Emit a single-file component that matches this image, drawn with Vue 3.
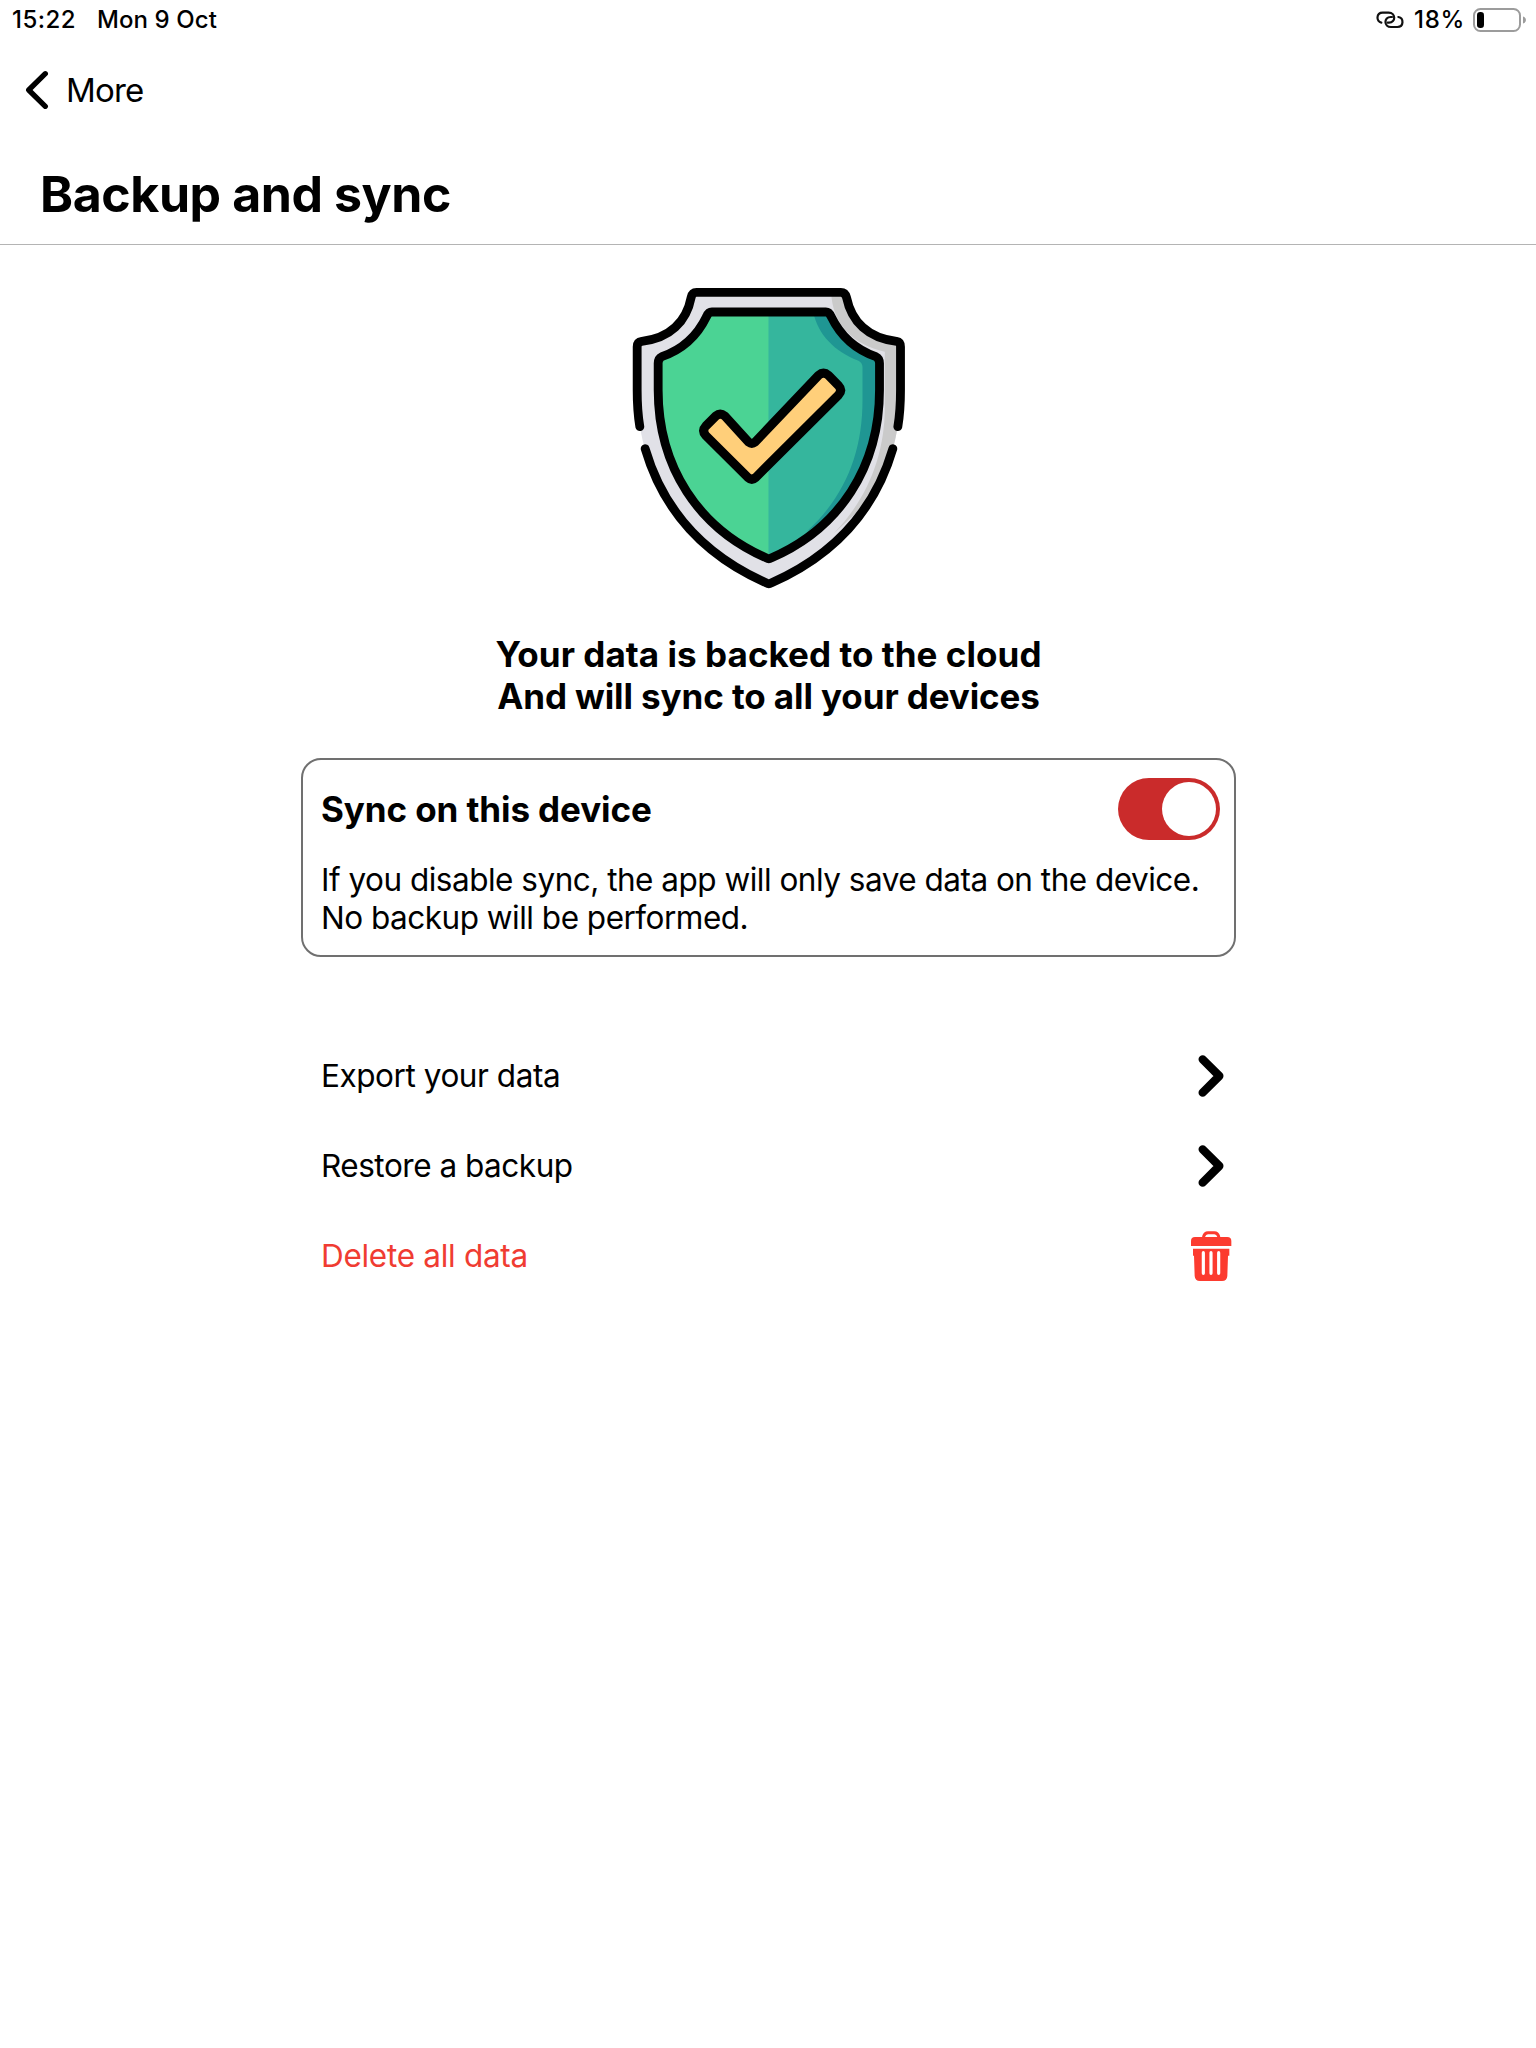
<script setup>
import { ref } from 'vue'

const syncEnabled = ref(true)
</script>

<template>
  <div class="screen">
    <header class="status">
      <span class="time">15:22</span>
      <span class="date">Mon 9 Oct</span>
      <svg class="link" viewBox="0 0 84 54" width="28" height="18">
        <g fill="none" stroke="#111" stroke-width="6.6" stroke-linecap="round">
          <path d="M16 35 C0 32 0 5 20 5 H38 C60 5 60 35 39 35 H35" />
          <path d="M67 18 C84 21 84 48 64 48 H45 C23 48 23 18 44 18 H48" />
        </g>
      </svg>
      <span class="percent">18%</span>
      <svg class="battery" viewBox="0 0 54 26" width="54" height="26">
        <rect x="1" y="2" width="46" height="22" rx="6.5" fill="none" stroke="#9c9c9c" stroke-width="2" />
        <rect x="4" y="5" width="7" height="16" rx="3.2" fill="#000" />
        <path d="M50 9.5 Q53 10.5 53 13 Q53 15.500 50 16.500 Z" fill="#9c9c9c" />
      </svg>
    </header>

    <nav class="nav">
      <svg viewBox="0 0 24 40" width="24" height="40">
        <path d="M20.300 3.700 L3.700 20 L20.300 36.300" fill="none" stroke="#000" stroke-width="5.3" stroke-linecap="round" stroke-linejoin="round" />
      </svg>
      <span>More</span>
    </nav>

    <div class="title"><h1>Backup and sync</h1></div>

    <main class="content">
      <svg class="shield" viewBox="-2.5 0 900 960" width="300" height="320">
        <defs>
          <clipPath id="outer">
            <path d="M228 38 H665 Q676 38 680 52 C695 125 745 175 830 184 Q842 186 842 200 V330 C842 600 700 790 447 912 C195 790 52 600 52 330 V200 Q52 186 66 184 C150 175 200 125 214 52 Q217 38 228 38 Z" />
          </clipPath>
          <clipPath id="inner">
            <path d="M276 96 H618 Q628 96 634 110 C662 168 705 208 768 230 Q779 235 779 250 V330 C779 560 660 740 447 837 C235 740 115 560 115 330 V250 Q115 235 126 230 C190 208 232 168 260 110 Q266 96 276 96 Z" />
          </clipPath>
        </defs>
        <g clip-path="url(#outer)">
          <rect x="30" y="20" width="830" height="900" fill="#e1e1e7" />
          <path d="M634 30 H860 V560 L640 762 C740 660 795 530 795 380 V215 C700 195 634 130 634 30 Z" fill="#cacaca" />
        </g>
        <g clip-path="url(#inner)">
          <rect x="100" y="80" width="348" height="780" fill="#4bd394" />
          <rect x="446" y="80" width="350" height="780" fill="#35b69d" />
          <path d="M580 96 H800 V600 L560 755 C675 650 728 520 728 360 V262 Q728 248 716 242 C645 215 595 165 580 96 Z" fill="#1f9693" />
        </g>
        <g fill="none" stroke="#000" stroke-width="26.500" stroke-linecap="round" stroke-linejoin="round">
          <path d="M60 440 C54 405 52 370 52 330 V200 Q52 186 66 184 C150 175 200 125 214 52 Q217 37 230 37 H663 Q676 37 680 52 C695 125 745 175 830 184 Q842 186 842 200 V330 C842 370 840 405 834 440" />
          <path d="M76 506 C130 690 250 825 440 909 Q447 913 454 909 C645 825 765 690 819 506" />
          <path d="M276 96 H618 Q628 96 634 110 C662 168 705 208 768 230 Q779 235 779 250 V330 C779 560 660 745 454 834 Q447 838 440 834 C235 745 115 560 115 330 V250 Q115 235 126 230 C190 208 232 168 260 110 Q266 96 276 96 Z" />
        </g>
        <path d="M258 438 L288 408 Q301 397 315 408 L386 486 Q396 494 406 486 L596 286 Q611 273 626 286 L656 317 Q669 331 656 345 L408 592 Q396 603 384 592 L258 467 Q245 452 258 438 Z" fill="#ffcf7a" stroke="#000" stroke-width="27" stroke-linejoin="round" />
      </svg>

      <h2 class="headline">
        <span class="first">Your data is backed to the cloud</span>
        <span class="second">And will sync to all your devices</span>
      </h2>

      <section class="card">
        <div class="card-head">
          <h3>Sync on this device</h3>
          <button class="toggle" :class="{ on: syncEnabled }" role="switch" :aria-checked="syncEnabled" @click="syncEnabled = !syncEnabled">
            <span class="knob"></span>
          </button>
        </div>
        <p>If you disable sync, the app will only save data on the device.<br />No backup will be performed.</p>
      </section>

      <ul class="actions">
        <li>
          <span>Export your data</span>
          <svg viewBox="0 0 198 270" width="66" height="90">
            <path d="M98 88 L148 138 L98 188" fill="none" stroke="#000" stroke-width="25" stroke-linecap="round" stroke-linejoin="round" />
          </svg>
        </li>
        <li class="restore">
          <span>Restore a backup</span>
          <svg viewBox="0 0 198 270" width="66" height="90">
            <path d="M98 88 L148 138 L98 188" fill="none" stroke="#000" stroke-width="25" stroke-linecap="round" stroke-linejoin="round" />
          </svg>
        </li>
        <li class="danger">
          <span>Delete all data</span>
          <svg viewBox="0 0 198 270" width="66" height="90">
            <path d="M101 86 V79 Q104 68 114 68 H133 Q143 68 146 79 V86" fill="none" stroke="#fc3b2f" stroke-width="9" />
            <path d="M75 81 H172 Q184 81 184 93 V108 H63 V93 Q63 81 75 81 Z" fill="#fc3b2f" />
            <path d="M69 116 H178 V137 H174 L172 198 Q171 213 156 213 H90 Q75 213 74 198 L72 137 H69 Z" fill="#fc3b2f" />
            <path d="M100 128 V190 M123 128 V190 M146 128 V190" stroke="#fff" stroke-width="9.500" stroke-linecap="round" />
          </svg>
        </li>
      </ul>
    </main>
  </div>
</template>

<style>
body {
  background: #fff;
}
</style>

<style scoped>
.screen {
  width: 1536px;
  height: 2048px;
  background: #fff;
  color: #000;
  font-family: Inter, "Liberation Sans", sans-serif;
  overflow: hidden;
}
h1, h2, h3, p, ul {
  margin: 0;
  padding: 0;
}
.status {
  display: flex;
  align-items: center;
  height: 39px;
  padding: 0 9px 0 12px;
  font-size: 24px;
  font-weight: 500;
  white-space: nowrap;
}
.time {
  width: 85px;
  letter-spacing: 0.5px;
}
.date {
  letter-spacing: 0.08px;
}
.link {
  margin-left: auto;
}
.percent {
  width: 59px;
  margin-left: 10px;
  letter-spacing: 0.7px;
}
.nav {
  display: flex;
  align-items: center;
  gap: 17px;
  height: 102px;
  padding-left: 25px;
  font-size: 33px;
  letter-spacing: -0.8px;
}
.title {
  display: flex;
  align-items: center;
  height: 101px;
  padding: 2px 0 0 40px;
  border-bottom: 1px solid #b4b4b4;
}
h1 {
  font-size: 50px;
  font-weight: 700;
  letter-spacing: -0.41px;
}
.content {
  display: flex;
  flex-direction: column;
  width: 935px;
  margin: 35px 0 0 301px;
}
.shield {
  align-self: center;
}
.headline {
  display: flex;
  flex-direction: column;
  align-items: center;
  height: 85px;
  margin-top: 33px;
  font-size: 35px;
  font-weight: 700;
  line-height: 42.3px;
}
.first {
  letter-spacing: 0.05px;
}
.second {
  letter-spacing: -0.1px;
}
.card {
  box-sizing: border-box;
  height: 199px;
  margin-top: 40px;
  padding: 18px 14px 0 18px;
  border: 2px solid #707070;
  border-radius: 20px;
}
.card-head {
  display: flex;
  align-items: center;
  justify-content: space-between;
  height: 62px;
}
h3 {
  font-size: 35px;
  font-weight: 700;
  letter-spacing: -0.09px;
}
.toggle {
  display: flex;
  align-items: center;
  width: 102px;
  height: 62px;
  padding: 4px;
  border: 0;
  border-radius: 31px;
  background: #ccc;
}
.toggle.on {
  justify-content: flex-end;
  background: #ca2b2b;
}
.knob {
  width: 54px;
  height: 54px;
  border-radius: 50%;
  background: #fff;
}
.card p {
  margin-top: 21px;
  font-size: 31.5px;
  line-height: 38px;
  letter-spacing: -0.5px;
  white-space: nowrap;
}
.actions {
  margin-top: 73px;
  list-style: none;
  font-size: 31.5px;
  letter-spacing: -0.44px;
}
.actions li {
  display: flex;
  align-items: center;
  justify-content: space-between;
  height: 90px;
  padding-left: 20px;
}
.actions .restore {
  letter-spacing: -0.48px;
}
.actions .danger {
  color: #f03c32;
  letter-spacing: -0.29px;
}
</style>
